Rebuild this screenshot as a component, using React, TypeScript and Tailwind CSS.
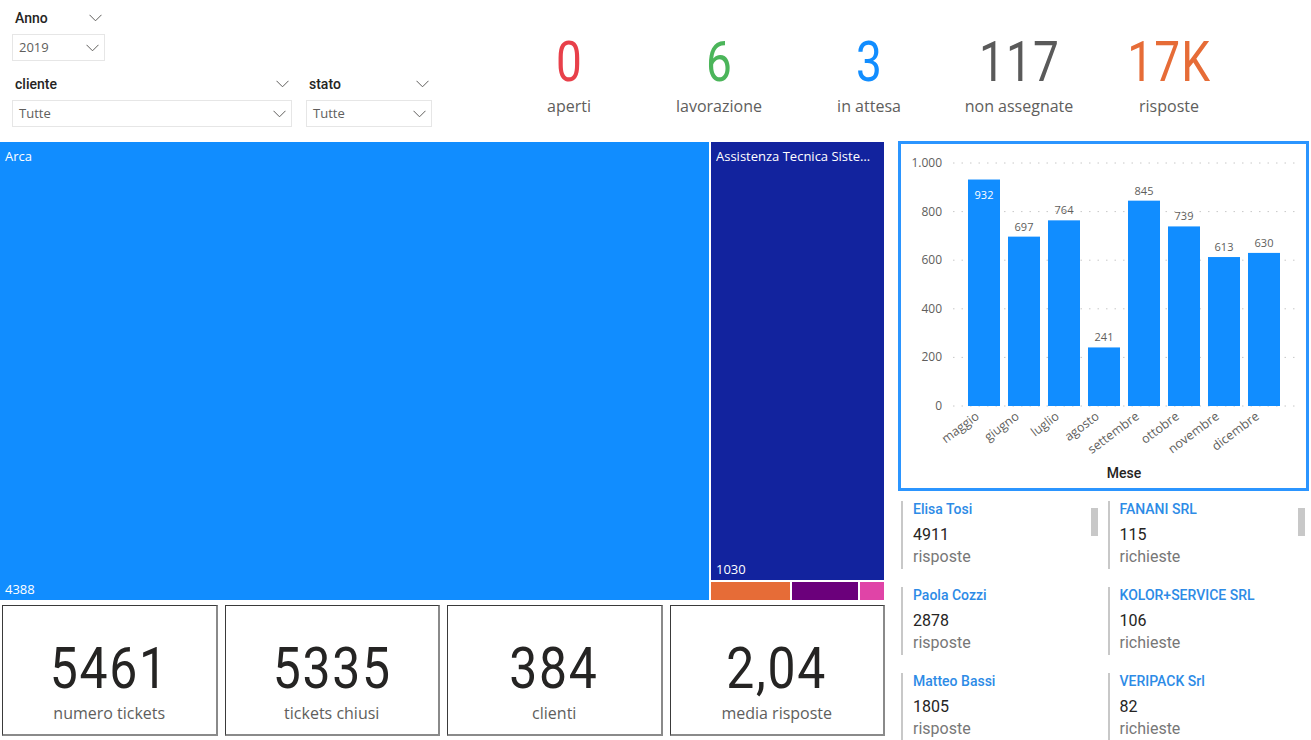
import React from "react";

const DIN = "font-['Roboto','Liberation_Sans',sans-serif]";
const SEGOE = "font-['Open_Sans','Noto_Sans',sans-serif]";

const KPIS = [
  { value: "0", label: "aperti", color: "text-[#e8404a]" },
  { value: "6", label: "lavorazione", color: "text-[#4bb55a]" },
  { value: "3", label: "in attesa", color: "text-[#118dff]" },
  { value: "117", label: "non assegnate", color: "text-[#5a5a5a]" },
  { value: "17K", label: "risposte", color: "text-[#e66c37]" },
];

const CARDS = [
  { value: "5461", label: "numero tickets" },
  { value: "5335", label: "tickets chiusi" },
  { value: "384", label: "clienti" },
  { value: "2,04", label: "media risposte" },
];

const MONTHS = [
  { name: "maggio", value: 932 },
  { name: "giugno", value: 697 },
  { name: "luglio", value: 764 },
  { name: "agosto", value: 241 },
  { name: "settembre", value: 845 },
  { name: "ottobre", value: 739 },
  { name: "novembre", value: 613 },
  { name: "dicembre", value: 630 },
];

const OPERATORS = [
  { name: "Elisa Tosi", value: "4911", label: "risposte" },
  { name: "Paola Cozzi", value: "2878", label: "risposte" },
  { name: "Matteo Bassi", value: "1805", label: "risposte" },
];

const CLIENTS = [
  { name: "FANANI SRL", value: "115", label: "richieste" },
  { name: "KOLOR+SERVICE SRL", value: "106", label: "richieste" },
  { name: "VERIPACK Srl", value: "82", label: "richieste" },
];

function Chevron() {
  return (
    <svg width="13" height="8" viewBox="0 0 13 8">
      <polyline points="0.5,0.8 6.5,6.8 12.5,0.8" fill="none" stroke="#605e5c" strokeWidth="1" />
    </svg>
  );
}

function Slicer({ title, value, width }: { title: string; value: string; width: string }) {
  return (
    <div className={width}>
      <div className="flex h-[24px] items-center justify-between pl-[3px] pr-[3px]">
        <span className={`${DIN} text-[14px] font-medium text-[#252423]`}>{title}</span>
        <Chevron />
      </div>
      <div className="mt-[4px] flex h-[27px] items-center justify-between border border-[#e6e6e6] pl-[6px] pr-[5px]">
        <span className={`${SEGOE} text-[13px] text-[#605e5c]`}>{value}</span>
        <Chevron />
      </div>
    </div>
  );
}

function ListColumn({ items }: { items: { name: string; value: string; label: string }[] }) {
  return (
    <div className="relative w-[209px] pl-[3px]">
      {items.map((item) => (
        <div key={item.name} className="mb-[18px] h-[68px] border-l-2 border-[#c8c8c8] pl-[10px]">
          <div className={`${DIN} text-[14px] font-medium leading-[16px] text-[#2d8be6]`}>{item.name}</div>
          <div className={`${DIN} mt-[9px] text-[16px] leading-[18px] text-[#252423]`}>{item.value}</div>
          <div className={`${DIN} mt-[4px] text-[16px] leading-[18px] text-[#777777]`}>{item.label}</div>
        </div>
      ))}
      <div className="absolute left-[193px] top-[7px] h-[28px] w-[7px] bg-[#c8c8c8]" />
    </div>
  );
}

function MonthChart() {
  const base = 262;
  const ticks = [1000, 800, 600, 400, 200, 0];
  return (
    <svg width="405" height="344" className={SEGOE}>
      {ticks.map((t) => {
        const y = base - t * 0.243;
        return (
          <g key={t}>
            <line x1="52" x2="394" y1={y} y2={y} stroke="#c8c8c8" strokeWidth="1" strokeDasharray="1.5 7" />
            <text x="41" y={y + 4} textAnchor="end" fontSize="12" fill="#605e5c">
              {t === 1000 ? "1.000" : t}
            </text>
          </g>
        );
      })}
      {MONTHS.map((m, i) => {
        const x = 67 + i * 40;
        const h = m.value * 0.243;
        const cx = x + 16;
        const inside = m.value > 900;
        return (
          <g key={m.name}>
            <rect x={x} y={base - h} width="32" height={h} fill="#118dff" />
            <text
              x={cx}
              y={inside ? base - h + 19 : base - h - 6}
              textAnchor="middle"
              fontSize="11"
              fill={inside ? "#ffffff" : "#605e5c"}
            >
              {m.value}
            </text>
            <text
              x={cx - 4}
              y={274}
              textAnchor="end"
              fontSize="12.5"
              fill="#605e5c"
              transform={`rotate(-37 ${cx - 4} 274)`}
            >
              {m.name}
            </text>
          </g>
        );
      })}
      <text x="223" y="334" textAnchor="middle" fontSize="14" fontWeight="500" fill="#252423" className={DIN}>
        Mese
      </text>
    </svg>
  );
}

export default function App() {
  return (
    <div className="flex h-[740px] w-[1311px] flex-col overflow-hidden bg-white">
      <div className="flex h-[141px] shrink-0">
        <div className="w-[494px] pl-[12px] pt-[6px]">
          <Slicer title="Anno" value="2019" width="w-[93px]" />
          <div className="mt-[11px] flex gap-[14px]">
            <Slicer title="cliente" value="Tutte" width="w-[280px]" />
            <Slicer title="stato" value="Tutte" width="w-[126px]" />
          </div>
        </div>
        <div className="flex pt-[34px]">
          {KPIS.map((k) => (
            <div key={k.label} className="flex w-[150px] flex-col items-center">
              <div className={`${DIN} ${k.color} scale-x-[0.82] text-[56px] leading-[56px] tracking-[1.5px]`}>{k.value}</div>
              <div className={`${SEGOE} mt-[4px] text-[16px] text-[#605e5c]`}>{k.label}</div>
            </div>
          ))}
        </div>
      </div>

      <div className="flex min-h-0 flex-1 overflow-hidden">
        <div className="w-[885px]">
          <div className={`${SEGOE} flex h-[459px] gap-[2px] pt-[1px] text-[13px] text-white`}>
            <div className="flex w-[709px] flex-col justify-between bg-[#118dff] px-[5px] pb-[1px] pt-[5px]">
              <span>Arca</span>
              <span>4388</span>
            </div>
            <div className="flex w-[173px] flex-col gap-[2px]">
              <div className="flex min-w-0 flex-1 flex-col justify-between bg-[#12239e] pb-[1px] pl-[5px] pr-[10px] pt-[5px]">
                <span className="truncate">Assistenza Tecnica Sistemi Srl</span>
                <span>1030</span>
              </div>
              <div className="flex h-[18px] gap-[2px]">
                <div className="w-[79px] bg-[#e66c37]" />
                <div className="w-[66px] bg-[#6b007b]" />
                <div className="w-[24px] bg-[#e044a7]" />
              </div>
            </div>
          </div>
          <div className="mt-[5px] grid h-[131px] grid-cols-4 gap-[7px] pl-[2px]">
            {CARDS.map((c) => (
              <div
                key={c.label}
                className="flex flex-col items-center border border-[#3a3a3a] border-r-2 border-b-2 border-r-[#8a8a8a] border-b-[#8a8a8a] pt-[32px]"
              >
                <div className={`${DIN} scale-x-[0.86] text-[58px] leading-[60px] tracking-[2px] text-[#252423]`}>{c.value}</div>
                <div className={`${SEGOE} mt-[6px] text-[16px] leading-[18px] text-[#605e5c]`}>{c.label}</div>
              </div>
            ))}
          </div>
        </div>

        <div className="ml-[13px] w-[413px]">
          <div className="h-[350px] w-[411px] border-[3px] border-[#2b95ff]">
            <MonthChart />
          </div>
          <div className="mt-[10px] flex">
            <ListColumn items={OPERATORS} />
            <ListColumn items={CLIENTS} />
          </div>
        </div>
      </div>
    </div>
  );
}
